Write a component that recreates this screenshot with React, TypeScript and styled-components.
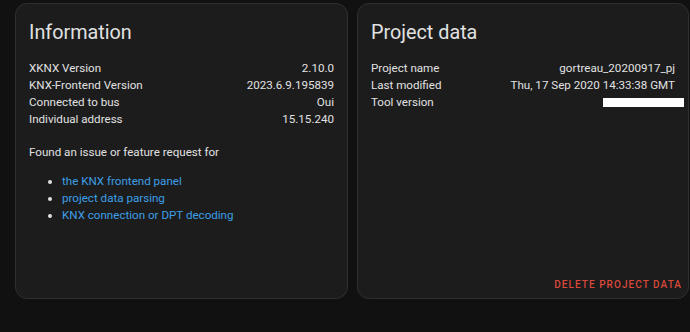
import React from "react";
import styled, { createGlobalStyle } from "styled-components";

const Global = createGlobalStyle`
  html, body { margin: 0; padding: 0; background: #111111; }
  body { font-family: Roboto, "Noto Sans", sans-serif; -webkit-font-smoothing: antialiased; }
`;

const Page = styled.div`
  display: grid;
  grid-template-columns: 333px 332px;
  column-gap: 9px;
  padding: 3px 0 0 15px;
  height: 332px;
  box-sizing: border-box;
`;

const Card = styled.div`
  background: #1c1c1c;
  border: 1px solid #2f2f2f;
  border-radius: 12px;
  height: 296px;
  box-sizing: border-box;
  padding: 15px 13px 0 13px;
  display: flex;
  flex-direction: column;
  color: #e1e1e1;
`;

const Title = styled.h1`
  margin: 0 0 13px 0;
  font-size: 19.8px;
  font-weight: 400;
  line-height: 28px;
  color: #e1e1e1;
`;

const Rows = styled.div`
  display: flex;
  flex-direction: column;
`;

const Row = styled.div`
  display: flex;
  justify-content: space-between;
  font-size: 11.6px;
  line-height: 17px;
`;

const Redacted = styled.span`
  display: inline-block;
  width: 81px;
  height: 9px;
  margin-top: 4px;
  margin-right: -9px;
  background: #ffffff;
`;

const Paragraph = styled.p`
  margin: 16px 0 12px 0;
  font-size: 11.6px;
  line-height: 17px;
`;

const List = styled.ul`
  margin: 0;
  padding-left: 33px;
  font-size: 11.6px;
  line-height: 17px;
`;

const Link = styled.a`
  color: #3d9fe6;
  text-decoration: none;
`;

const Actions = styled.div`
  margin-top: auto;
  display: flex;
  justify-content: flex-end;
  margin-right: -7px;
  padding-bottom: 5px;
`;

const DangerButton = styled.button`
  background: none;
  border: none;
  padding: 0;
  color: #d9483b;
  font-family: Roboto, sans-serif;
  font-size: 10px;
  font-weight: 500;
  letter-spacing: 1.05px;
  line-height: 16px;
  text-transform: uppercase;
`;

export default function App() {
  return (
    <>
      <Global />
      <Page>
        <Card>
          <Title>Information</Title>
          <Rows>
            <Row><span>XKNX Version</span><span>2.10.0</span></Row>
            <Row><span>KNX-Frontend Version</span><span>2023.6.9.195839</span></Row>
            <Row><span>Connected to bus</span><span>Oui</span></Row>
            <Row><span>Individual address</span><span>15.15.240</span></Row>
          </Rows>
          <Paragraph>Found an issue or feature request for</Paragraph>
          <List>
            <li><Link href="#">the KNX frontend panel</Link></li>
            <li><Link href="#">project data parsing</Link></li>
            <li><Link href="#">KNX connection or DPT decoding</Link></li>
          </List>
        </Card>
        <Card>
          <Title>Project data</Title>
          <Rows>
            <Row><span>Project name</span><span>gortreau_20200917_pj</span></Row>
            <Row><span>Last modified</span><span>Thu, 17 Sep 2020 14:33:38 GMT</span></Row>
            <Row><span>Tool version</span><Redacted /></Row>
          </Rows>
          <Actions>
            <DangerButton>Delete project data</DangerButton>
          </Actions>
        </Card>
      </Page>
    </>
  );
}
